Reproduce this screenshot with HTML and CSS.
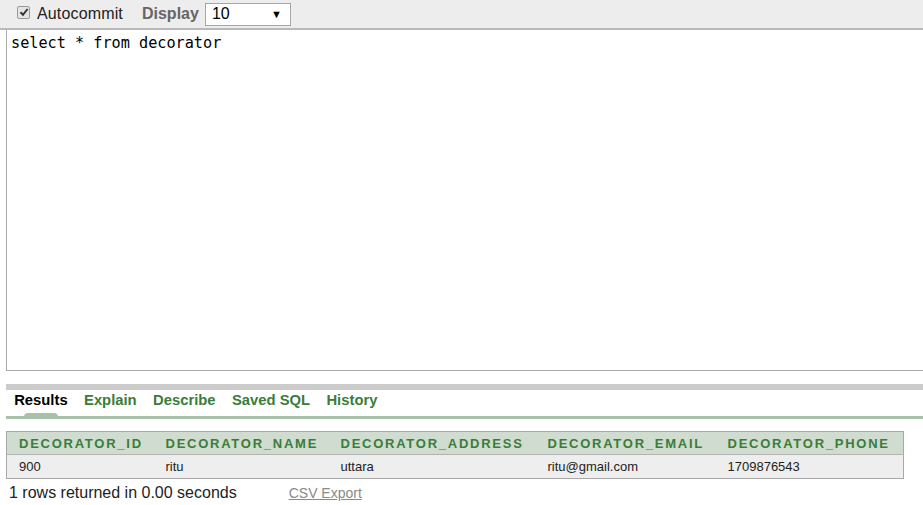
FILE: index.html
```html
<!DOCTYPE html>
<html>
<head>
<meta charset="utf-8">
<link rel="stylesheet" href="styles.css">
</head>
<body>
<div class="toolbar">
  <label class="autocommit"><span class="check"><svg width="10" height="10" viewBox="0 0 10 10"><path d="M1.5 5.2 L4 7.8 L8.6 2" fill="none" stroke="#333" stroke-width="2"/></svg></span>Autocommit</label>
  <span class="display-label">Display</span>
  <div class="select"><span>10</span><span class="arrow">▼</span></div>
</div>
<div class="editor">select * from decorator</div>
<div class="splitter"></div>
<div class="tabs">
  <span class="tab active">Results</span>
  <span class="tab">Explain</span>
  <span class="tab">Describe</span>
  <span class="tab">Saved SQL</span>
  <span class="tab">History</span>
</div>
<table class="results">
  <colgroup>
    <col class="c1"><col class="c2"><col class="c3"><col class="c4"><col class="c5">
  </colgroup>
  <thead>
    <tr><th>DECORATOR_ID</th><th>DECORATOR_NAME</th><th>DECORATOR_ADDRESS</th><th>DECORATOR_EMAIL</th><th>DECORATOR_PHONE</th></tr>
  </thead>
  <tbody>
    <tr><td>900</td><td>ritu</td><td>uttara</td><td>ritu@gmail.com</td><td>1709876543</td></tr>
  </tbody>
</table>
<div class="footer">
  <span class="count">1 rows returned in 0.00 seconds</span>
  <a class="csv">CSV Export</a>
</div>
</body>
</html>
```
FILE: styles.css
```css
html, body {
  margin: 0;
  padding: 0;
  background: #fff;
  font-family: "Liberation Sans", Arial, sans-serif;
  overflow: hidden;
}
.toolbar {
  height: 28px;
  background: #ededed;
  border-bottom: 2px solid #b9b9b9;
  display: flex;
  align-items: center;
  padding-left: 17px;
  font-size: 16px;
  color: #222;
}
.autocommit {
  display: flex;
  align-items: center;
  letter-spacing: 0.15px;
}
.check {
  width: 11px;
  height: 11px;
  border: 1px solid #999;
  border-radius: 2px;
  background: #e4e4e4;
  display: flex;
  align-items: center;
  justify-content: center;
  margin-right: 7px;
  margin-top: -4px;
}
.display-label {
  font-weight: bold;
  color: #666;
  margin-left: 19px;
}
.select {
  margin-left: 6px;
  border: 1px solid #a6a6a6;
  background: #fff;
  display: flex;
  align-items: center;
  justify-content: space-between;
  padding: 0 8px 0 6px;
  box-sizing: border-box;
  width: 86px;
  height: 23px;
  color: #000;
}
.arrow {
  font-size: 11px;
}
.editor {
  margin-left: 6px;
  height: 341px;
  box-sizing: border-box;
  border: 1px solid #aaa;
  border-top: none;
  border-right: none;
  background: #fff;
  font-family: "DejaVu Sans Mono", "Liberation Mono", monospace;
  font-size: 15.2px;
  padding: 4px 4px;
  color: #000;
}
.splitter {
  margin: 13px 0 0 6px;
  height: 6px;
  background: #cbcbcb;
}
.tabs {
  margin-left: 6px;
  height: 26px;
  border-bottom: 3px solid #a9c0a9;
  display: flex;
  align-items: flex-start;
  font-size: 14.8px;
  font-weight: bold;
}
.tab {
  color: #3a7d3a;
  padding: 0 8.2px;
  position: relative;
  line-height: 20px;
}
.tab.active {
  color: #000;
}
.tab.active::after {
  content: "";
  position: absolute;
  left: 18px;
  width: 34px;
  bottom: -7px;
  height: 4px;
  background: #a9c0a9;
  border-radius: 4px 4px 0 0;
}
.results {
  margin: 12px 0 0 6px;
  border-collapse: collapse;
  border: 1px solid #a9a9a9;
  width: 897px;
  table-layout: fixed;
}
.c1 { width: 147px; }
.c2 { width: 175px; }
.c3 { width: 207px; }
.c4 { width: 180px; }
.c5 { width: 188px; }
.results th {
  background: #cfdccf;
  color: #3a7d3a;
  font-size: 13px;
  font-weight: bold;
  letter-spacing: 1.75px;
  text-align: left;
  padding: 0 0 0 12px;
  height: 22px;
  border-bottom: 1px solid #b3b3b3;
  white-space: nowrap;
}
.results td {
  background: #eeeeee;
  color: #222;
  font-size: 13px;
  padding: 0 0 0 12px;
  height: 23px;
}
.footer {
  display: flex;
  align-items: baseline;
  padding: 5px 0 0 9px;
}
.count {
  font-size: 16px;
  color: #222;
}
.csv {
  margin-left: 52px;
  font-size: 14px;
  color: #8a8a8a;
  text-decoration: underline;
}
```
